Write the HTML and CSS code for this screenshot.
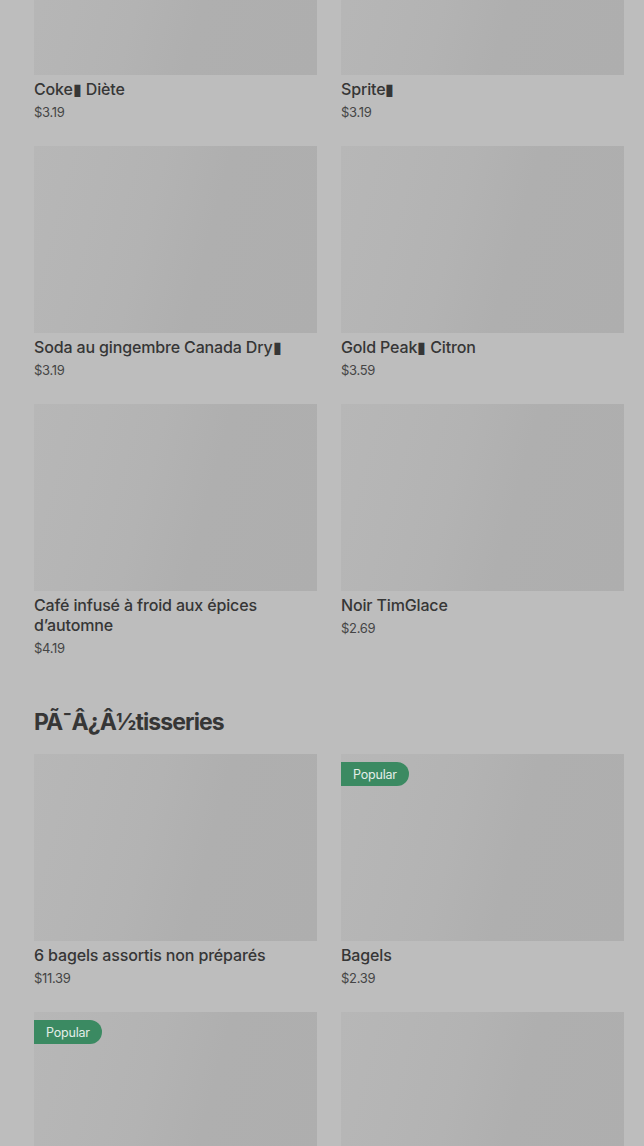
FILE: index.html
```html
<!DOCTYPE html>
<html lang="fr">
<head>
    <meta charset="UTF-8">
    <meta name="viewport" content="width=device-width, initial-scale=1.0">
    <title>Menu</title>
    <link rel="stylesheet" href="styles.css">
</head>
<body>
    <main class="menu">
        <section class="category">
            <div class="grid">
                <div class="item">
                    <div class="thumb"></div>
                    <div class="name">Coke▮ Diète</div>
                    <div class="price">$3.19</div>
                </div>
                <div class="item">
                    <div class="thumb"></div>
                    <div class="name">Sprite▮</div>
                    <div class="price">$3.19</div>
                </div>
                <div class="item">
                    <div class="thumb"></div>
                    <div class="name">Soda au gingembre Canada Dry▮</div>
                    <div class="price">$3.19</div>
                </div>
                <div class="item">
                    <div class="thumb"></div>
                    <div class="name">Gold Peak▮ Citron</div>
                    <div class="price">$3.59</div>
                </div>
                <div class="item">
                    <div class="thumb"></div>
                    <div class="name">Café infusé à froid aux épices d’automne</div>
                    <div class="price">$4.19</div>
                </div>
                <div class="item">
                    <div class="thumb"></div>
                    <div class="name">Noir TimGlace</div>
                    <div class="price">$2.69</div>
                </div>
            </div>
        </section>

        <section class="category">
            <h2>PÃ¯Â¿Â½tisseries</h2>
            <div class="grid">
                <div class="item">
                    <div class="thumb"></div>
                    <div class="name">6 bagels assortis non préparés</div>
                    <div class="price">$11.39</div>
                </div>
                <div class="item">
                    <div class="thumb"><span class="badge">Popular</span></div>
                    <div class="name">Bagels</div>
                    <div class="price">$2.39</div>
                </div>
                <div class="item">
                    <div class="thumb"><span class="badge">Popular</span></div>
                </div>
                <div class="item">
                    <div class="thumb"></div>
                </div>
            </div>
        </section>
    </main>
</body>
</html>
```

FILE: styles.css
```css
:root {
    --page-bg: #bdbdbd;
    --text-color: #363636;
    --price-color: #454545;
    --badge-bg: #3b8a62;
}

* {
    margin: 0;
    padding: 0;
    box-sizing: border-box;
}

body {
    font-family: Inter, 'Noto Sans', sans-serif;
    background-color: var(--page-bg);
    color: var(--text-color);
    overflow: hidden;
}

/* page is scrolled: first row is partly above the fold */
.menu {
    margin-top: -112px;
    padding: 0 20px 0 34px;
}

.category + .category {
    margin-top: 48px;
}

.category h2 {
    font-size: 23px;
    font-weight: 700;
    line-height: 32px;
    letter-spacing: -0.9px;
    margin-bottom: 16px;
}

.grid {
    display: grid;
    grid-template-columns: 1fr 1fr;
    column-gap: 24px;
    row-gap: 24px;
}

.thumb {
    position: relative;
    height: 187px;
    background: linear-gradient(105deg, #b7b7b7 0%, #b5b5b5 22%, #b3b3b3 40%, #afafaf 60%, #aeaeae 100%);
}

.badge {
    position: absolute;
    top: 8px;
    left: 0;
    height: 24px;
    padding: 0 12px 0 12px;
    display: flex;
    align-items: center;
    background-color: var(--badge-bg);
    color: #e3eee8;
    font-size: 12.5px;
    letter-spacing: -0.2px;
    border-radius: 0 12px 12px 0;
}

.name {
    margin-top: 4px;
    font-size: 16px;
    font-weight: 500;
    line-height: 20px;
    letter-spacing: -0.15px;
}

.price {
    margin-top: 3px;
    font-size: 13px;
    line-height: 20px;
    letter-spacing: -0.3px;
    color: var(--price-color);
}
```
